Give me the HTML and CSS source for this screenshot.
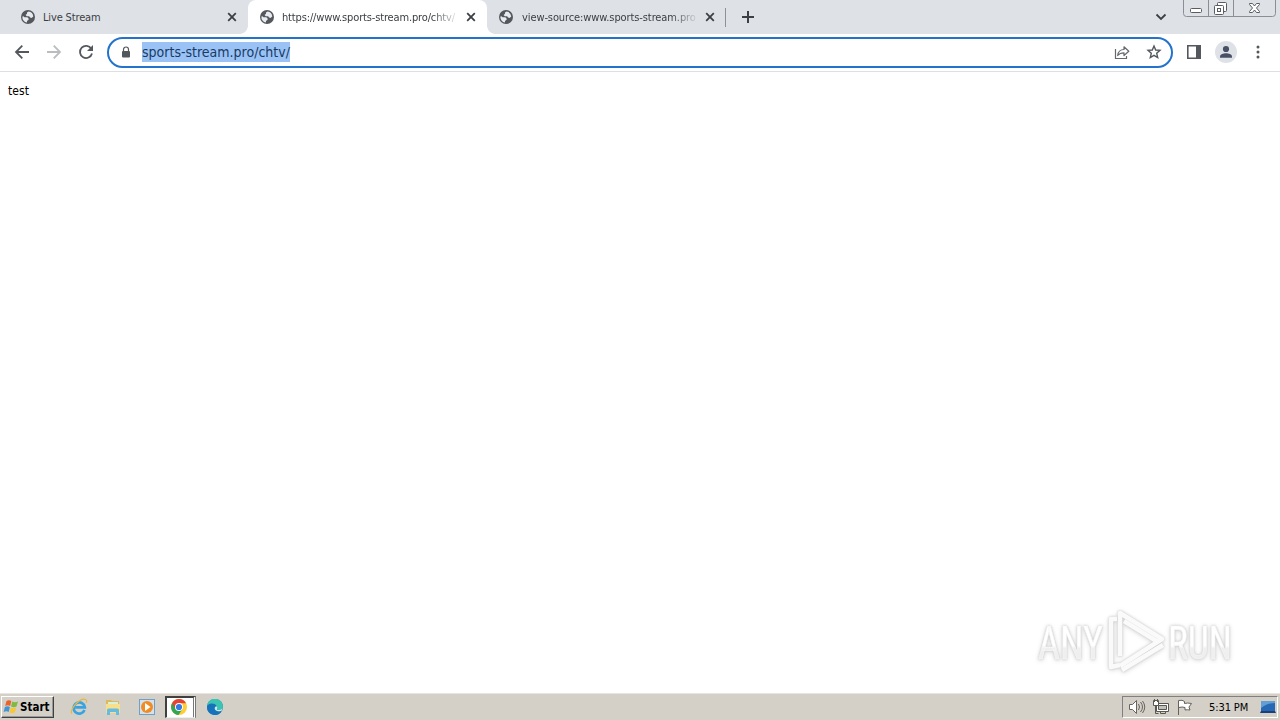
FILE: index.html
```html
<!DOCTYPE html>
<html lang="en">
<head>
    <meta charset="UTF-8">
    <meta name="viewport" content="width=device-width, initial-scale=1.0">
    <title>sports-stream.pro/chtv/</title>
    <link rel="stylesheet" href="styles.css">
</head>
<body>

<svg class="defs" width="0" height="0">
    <symbol id="globe" viewBox="0 0 14 14">
        <circle cx="7" cy="7" r="7" fill="#54585d"/>
        <path d="M7.6 1.5 6 2.4v1.4L4.6 5l1.2 1.2h2.3l1 1.4 1.4.3 1.8-1.4A5.7 5.7 0 0 0 7.6 1.5ZM1.4 6.4A5.7 5.7 0 0 0 6 12.6v-1.5l1.6-1.4V8.5L6.3 7.3H3.5L2.4 6.2Z" fill="#e7eaee"/>
    </symbol>
    <symbol id="cross" viewBox="0 0 10 10">
        <path d="m1.2 1.2 7.6 7.6m0-7.6L1.2 8.8" stroke="#3c4043" stroke-width="1.8"/>
    </symbol>
</svg>

<div class="screen">
    <header class="tabs">
        <div class="tab">
            <svg class="globe"><use href="#globe"/></svg>
            <span class="title">Live Stream</span>
            <svg class="cross"><use href="#cross"/></svg>
        </div>
        <div class="tab active">
            <svg class="globe"><use href="#globe"/></svg>
            <span class="title fade">https://www.sports-stream.pro/chtv/</span>
            <svg class="cross"><use href="#cross"/></svg>
        </div>
        <div class="tab">
            <svg class="globe"><use href="#globe"/></svg>
            <span class="title fade source">view-source:www.sports-stream.pro</span>
            <svg class="cross"><use href="#cross"/></svg>
        </div>
        <div class="divider"></div>
        <svg class="plus" width="12" height="12"><path d="M6 0v12M0 6h12" stroke="#3c4043" stroke-width="2"/></svg>
        <svg class="chevron" width="12" height="8"><path d="m1.5 1.500 4.500 4.500 4.500-4.500" fill="none" stroke="#3c4043" stroke-width="1.800"/></svg>
        <svg class="window-buttons" width="94" height="18" fill="none" stroke="#595c61">
            <path d="M.5 0v13.500q0 3 3 3h86q3 0 3-3V0M25.500 0v16M50.500 0v16" stroke="#8b8e94"/>
            <rect x="7.500" y="8.500" width="11" height="4" rx="1" fill="#fff"/>
            <rect x="34.500" y="2.500" width="9" height="9" rx="1" fill="#fff"/>
            <rect x="31.500" y="5.500" width="9" height="9" rx="1" fill="#fff"/>
            <rect x="34.500" y="8.500" width="3" height="3"/>
            <path d="M66.500 3.500h3l2 2.500 2-2.500h3v1L73.500 8l3 3.500v1h-3l-2-2.500-2 2.500h-3v-1l3-3.500-3-3.500Z" fill="#fff"/>
        </svg>
    </header>

    <nav class="toolbar">
        <svg width="16" height="16"><path d="M15 8H2m6.300-6.300L2 8l6.300 6.300" fill="none" stroke="#54585d" stroke-width="1.800"/></svg>
        <svg width="16" height="16"><path d="M1 8h13M7.700 1.700 14 8l-6.300 6.300" fill="none" stroke="#babcbe" stroke-width="1.800"/></svg>
        <svg width="16" height="16"><path d="M13.300 4.700A6.100 6.100 0 1 0 14 9.500" fill="none" stroke="#54585d" stroke-width="1.800"/><path d="M15 1v6H9Z" fill="#54585d"/></svg>
        <div class="address">
            <svg class="lock" width="10" height="13"><path d="M2.500 6V3.500a2.500 2.500 0 0 1 5 0V6" fill="none" stroke="#54585d" stroke-width="1.200"/><rect x="1" y="5" width="8" height="6.500" rx="1" fill="#54585d"/></svg>
            <span class="url">sports-stream.pro/chtv/</span>
            <svg class="share" width="16" height="15" fill="none" stroke="#65686c" stroke-width="1.200"><path d="M1.500 4v9.500h11V11"/><path d="M3.700 10.500C4.200 6.500 6.500 4.500 10 4.500V1.800l4.800 4.500L10 10.500V7.800c-2.800 0-4.700.7-6.300 2.700Z" stroke-linejoin="round"/></svg>
            <svg class="star" width="16" height="16"><path d="m8 2 1.700 4 4.300.4-3.300 2.900 1 4.200L8 11.300l-3.700 2.200 1-4.200L2 6.400 6.300 6Z" fill="none" stroke="#54585d" stroke-width="1.400"/></svg>
        </div>
        <svg class="panel" width="14" height="14"><path d="M.8.800h12.400v12.400H.8Z" fill="none" stroke="#54585d" stroke-width="1.600"/><path d="M9 0h5v14H9Z" fill="#54585d"/></svg>
        <svg class="profile" width="22" height="22"><circle cx="11" cy="11" r="11" fill="#dee1e6"/><circle cx="11" cy="8" r="3.100" fill="#485066"/><path d="M5 16.800v-1.300c0-2.200 3.500-3.200 6-3.200s6 1 6 3.200v1.300Z" fill="#485066"/></svg>
        <svg class="dots" width="4" height="14" fill="#54585d"><circle cx="2" cy="2" r="1.500"/><circle cx="2" cy="7" r="1.500"/><circle cx="2" cy="12" r="1.500"/></svg>
    </nav>

    <main class="page">
        <p>test</p>
        <svg class="watermark" width="204" height="68">
            <defs>
                <linearGradient id="letters" x1="0" y1="0" x2="0" y2="1">
                    <stop offset=".55" stop-color="#fff"/>
                    <stop offset=".6" stop-color="#efefef"/>
                </linearGradient>
            </defs>
            <g class="watermark-text">
                <text x="6" y="52" textLength="65" lengthAdjust="spacingAndGlyphs">ANY</text>
                <text x="136" y="52" textLength="64" lengthAdjust="spacingAndGlyphs">RUN</text>
            </g>
            <g class="watermark-logo">
                <path d="M88 49V6l42 26-42 27"/>
                <path d="M92 14l34 21M85 12h-6v48l9-2M90 63l41-25"/>
            </g>
        </svg>
    </main>

    <footer class="taskbar">
        <div class="start">
            <svg width="17" height="16" viewBox="0 0 17 16"><path d="M3.500 2Q6 .5 8.300 2L7.200 7Q4.800 5.600 2.200 7Z" fill="#e9632b"/><path d="M9.200 2.500q2.500 1.400 5.800 0l-1.500 5q-2.800 1.400-5.400 0Z" fill="#81b941"/><path d="M1.900 8q2.700-1.400 5 0l-1.200 5Q3.500 11.700.6 13Z" fill="#4096d5"/><path d="M7.800 8.400q2.600 1.400 5.400 0l-1.400 5q-2.800 1.400-5.300 0Z" fill="#f7c738"/></svg>
            <b>Start</b>
        </div>
        <div class="apps">
            <svg width="18" height="18" viewBox="0 0 18 18"><path d="M14.500 12A5.600 5.600 0 1 1 14.800 9.300H5.200" fill="none" stroke="#38a4df" stroke-width="2.700"/><path d="M2 15.500C-1.500 13 9-.5 15.500 1.500c1.500.6 1.300 2 .6 3.300" fill="none" stroke="#e4b84a" stroke-width="1.300"/></svg>
            <svg width="18" height="18" viewBox="0 0 18 18"><path d="M2 4V2h5l1 1h7v11H2Z" fill="#ddb957"/><path d="M4 4h10v6H4Z" fill="#d9f0db"/><path d="M2 6h14v9H2Z" fill="#f7df8e"/><path d="M3 17v-5q0-1.500 1.500-1.500h9q1.500 0 1.500 1.500v5h-3v-3H6v3Z" fill="#65bce0"/></svg>
            <svg width="18" height="18" viewBox="0 0 18 18"><rect x="1.500" y="1.500" width="15" height="15" fill="#d2e3ee" stroke="#6ea0c9"/><circle cx="9" cy="9" r="6" fill="#f28c22"/><path d="m7 5 5.500 4L7 13Z" fill="#fff"/></svg>
            <div class="running">
                <svg width="16" height="16" viewBox="0 0 16 16"><circle cx="8" cy="8" r="8" fill="#ffcd35"/><path d="M1.100 4A8 8 0 0 0 7.500 16l4-6.100L8 8Z" fill="#32a653"/><path d="M1.100 4A8 8 0 0 1 15 4.200H8L4.500 10Z" fill="#e54335"/><circle cx="8" cy="8" r="4" fill="#fff"/><circle cx="8" cy="8" r="3.100" fill="#3679e5"/></svg>
            </div>
            <svg class="edge" width="16" height="16" viewBox="0 0 16 16"><circle cx="8" cy="8" r="8" fill="#1479ba"/><path d="M0 8a8 8 0 0 1 16-.6c0 2.600-2 3.700-4.400 3.600-2 0-2-.8-1.500-1.600C11 5.600 4 3.500 0 8Z" fill="#3bc4b1"/><path d="M0 8c0-4 8-5 9.500-1C6 6.500 5 11 9 13c2 1 4 .8 5.500-.4A8 8 0 0 1 0 8Z" fill="#1673bb"/><path d="M9.300 7.200c-3 1.400-1.300 4.800 2 5 1.500.1 2.900-.3 3.500-.8l1-2.400c-1 1.600-2.500 2-4.200 2-2 0-2-.8-1.500-1.600.5-.8 0-1.700-.8-2.200Z" fill="#d7e7e9"/></svg>
        </div>
        <div class="tray">
            <svg width="18" height="18" fill="none" stroke="#67645f"><path d="M1.500 6.500h3l4-4v13l-4-4h-3Z" fill="#fff"/><path d="M10.500 6q2 3 0 6M12.500 4q4 5 0 10M14.500 3q4.500 6 0 12"/></svg>
            <svg width="18" height="18" fill="none" stroke="#595752"><path d="M4.500 5.500h12v8h-12Z" fill="#fff"/><path d="M6.500 7.500h8v4h-8Z" fill="#c4c1bb"/><path d="M8.500 14v1.500h5V14"/><path d="M1.500 2.500h5v5h-5Z" fill="#fff"/><path d="M2.500 1v3m3-3v3M3.500 8v7.500h3"/></svg>
            <svg width="18" height="18"><path d="M2.500 17V2.500q4-1 6 1v2q3-1 7 0L13 9l1 3q-3-.5-5 0V9.500q-3-1-6 0" fill="#fff" stroke="#65625d"/></svg>
            <span>5:31 PM</span>
            <svg class="desktop" width="16" height="16"><path d="M1 2h14v10H1Z" fill="#2768b4"/><path d="M1 2h14v2Q7 4 1 9Z" fill="#609ed5"/><path d="M1 12h14l1 2H0Z" fill="#193f7c"/></svg>
        </div>
    </footer>
</div>

</body>
</html>
```

FILE: styles.css
```css
* {
    box-sizing: border-box;
}
body {
    margin: 0;
    font-family: "DejaVu Sans Condensed", "DejaVu Sans", sans-serif;
    font-stretch: condensed;
    background: #fff;
}
svg {
    display: block;
    flex-shrink: 0;
}
.defs {
    position: absolute;
}
.screen {
    width: 1280px;
    height: 720px;
    display: flex;
    flex-direction: column;
    overflow: hidden;
}
.tabs {
    height: 34px;
    display: flex;
    background: #dee1e6;
}
.tab {
    width: 239px;
    height: 34px;
    padding: 0 11px 0 12px;
    display: flex;
    align-items: center;
    font-size: 11px;
    color: #3c4043;
}
.tab:first-child {
    width: 248px;
    padding-left: 21px;
}
.tab.active {
    position: relative;
    background: #fff;
    border-radius: 8px 8px 0 0;
}
.tab.active::before,
.tab.active::after {
    content: "";
    position: absolute;
    bottom: 0;
    width: 8px;
    height: 8px;
}
.tab.active::before {
    right: 100%;
    background: radial-gradient(circle at 0 0, transparent 7.5px, #fff 8px);
}
.tab.active::after {
    left: 100%;
    background: radial-gradient(circle at 100% 0, transparent 7.5px, #fff 8px);
}
.globe {
    width: 14px;
    height: 14px;
}
.cross {
    width: 10px;
    height: 10px;
    margin-left: auto;
}
.title {
    width: 176px;
    margin-left: 8px;
    padding-top: 1px;
    overflow: hidden;
    white-space: nowrap;
    line-height: 16px;
    letter-spacing: -0.15px;
}
.fade {
    -webkit-mask-image: linear-gradient(to right, #000 150px, transparent 178px);
    mask-image: linear-gradient(to right, #000 150px, transparent 178px);
}
.source {
    padding-left: 1px;
    letter-spacing: -0.1px;
}
.divider {
    width: 1px;
    height: 19px;
    margin: 8px 16px 0 -1px;
    background: #8e9196;
}
.plus {
    margin-top: 11px;
}
.chevron {
    margin: 13px 16px 0 auto;
}
.window-buttons {
    margin-right: 3px;
}
.toolbar {
    height: 38px;
    padding: 0 19px 1px 14px;
    display: flex;
    align-items: center;
    gap: 16px;
    border-bottom: 1px solid #dddfe2;
}
.address {
    width: 1066px;
    flex-shrink: 0;
    height: 31px;
    margin-left: -3px;
    padding: 0 9px 0 12px;
    border: 2px solid #2372cc;
    border-radius: 16px;
    display: flex;
    align-items: center;
}
.url {
    margin-left: 11px;
    height: 20px;
    line-height: 21px;
    font-size: 14px;
    color: #173b64;
    background: #9bc2f5;
}
.share {
    margin-left: auto;
}
.star {
    margin-left: 16px;
}
.panel {
    margin-left: -2px;
}
.profile {
    margin-left: -2px;
}
.dots {
    margin-left: 3px;
}
.page {
    flex: 1;
    display: flex;
    justify-content: space-between;
    padding: 0 44px 18px 8px;
}
.page p {
    margin: 11px 0 0;
    font-size: 12px;
    line-height: 17px;
    letter-spacing: 0.1px;
}
.watermark {
    align-self: flex-end;
    overflow: visible;
    filter: drop-shadow(0 0 1px #c8c8c8) drop-shadow(0 1px 2px #ddd);
}
.watermark-text {
    font-family: Roboto, sans-serif;
    font-size: 46px;
    fill: url(#letters);
    stroke: #f7f7f7;
    stroke-width: 0.6px;
}
.watermark-logo {
    fill: none;
    stroke: #fafafa;
    stroke-width: 4.5px;
    stroke-linejoin: round;
}
.taskbar {
    height: 27px;
    padding: 2px 2px 2px 1px;
    display: flex;
    background: #d4d0c8;
    border-top: 1px solid #e8e5df;
}
.start {
    width: 53px;
    height: 22px;
    padding-left: 1px;
    display: flex;
    align-items: center;
    border: 1px solid;
    border-color: #fff #404040 #404040 #fff;
    box-shadow: inset -1px -1px #999;
    font-size: 11.5px;
}
.apps {
    height: 22px;
    margin-left: 16px;
    display: flex;
    align-items: center;
    gap: 16px;
}
.running {
    width: 31px;
    height: 22px;
    margin-left: -7px;
    display: flex;
    align-items: center;
    justify-content: center;
    background: #fff;
    border: 1px solid #404040;
    border-width: 2px 3px 1px 2px;
    border-right: 3px double #777;
    border-bottom-color: #eee;
}
.running svg {
    margin: -1px 2px 0 0;
}
.edge {
    margin-left: -5px;
}
.tray {
    width: 156px;
    height: 22px;
    margin-left: auto;
    padding: 0 1px 0 5px;
    display: flex;
    align-items: center;
    gap: 6px;
    border: 1px solid;
    border-color: #808080 #fff #fff #808080;
    font-size: 11px;
}
.tray span {
    margin-left: 9px;
    letter-spacing: -0.1px;
    white-space: nowrap;
}
.desktop {
    margin-left: auto;
}
```
